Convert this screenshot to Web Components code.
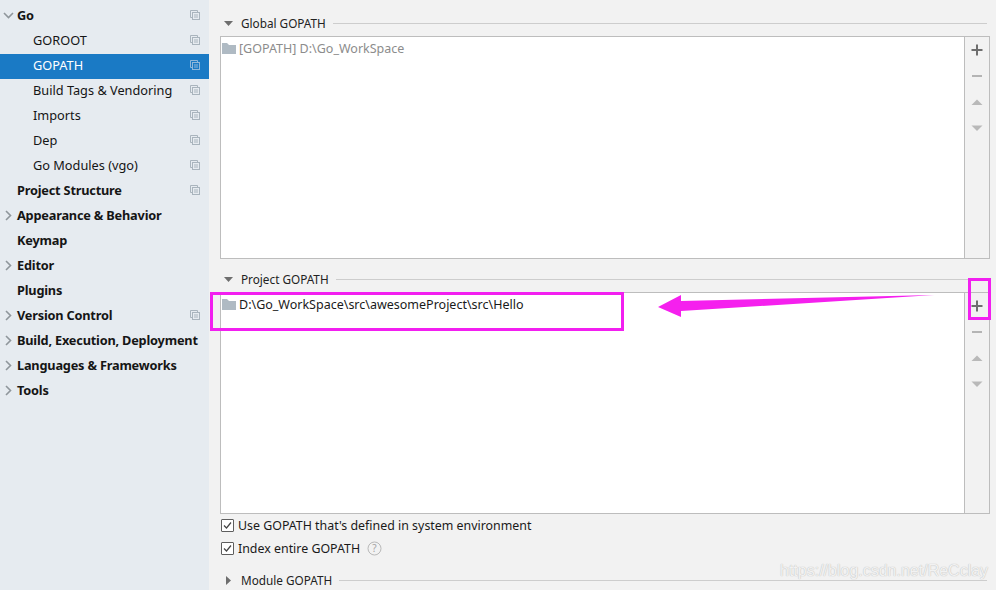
<!DOCTYPE html>
<html><head><meta charset="utf-8">
<style>
html,body{margin:0;padding:0;height:590px;overflow:hidden;background:#f2f2f2}
body{font:12.75px "Noto Sans",sans-serif;color:#1a1a1a}
</style></head>
<body>
<settings-app>
  <settings-nav slot="nav">
    <nav-row level="0" arrow="down" copy>Go</nav-row>
    <nav-row level="1" copy>GOROOT</nav-row>
    <nav-row level="1" copy selected>GOPATH</nav-row>
    <nav-row level="1" copy>Build Tags &amp; Vendoring</nav-row>
    <nav-row level="1" copy>Imports</nav-row>
    <nav-row level="1" copy>Dep</nav-row>
    <nav-row level="1" copy>Go Modules (vgo)</nav-row>
    <nav-row level="0" copy>Project Structure</nav-row>
    <nav-row level="0" arrow="right">Appearance &amp; Behavior</nav-row>
    <nav-row level="0">Keymap</nav-row>
    <nav-row level="0" arrow="right">Editor</nav-row>
    <nav-row level="0">Plugins</nav-row>
    <nav-row level="0" arrow="right" copy>Version Control</nav-row>
    <nav-row level="0" arrow="right">Build, Execution, Deployment</nav-row>
    <nav-row level="0" arrow="right">Languages &amp; Frameworks</nav-row>
    <nav-row level="0" arrow="right">Tools</nav-row>
  </settings-nav>
  <section-head open style="margin-top:12px">Global GOPATH</section-head>
  <path-table style="height:223px;margin-top:4px" muted path="[GOPATH] D:\Go_WorkSpace"></path-table>
  <section-head open style="margin-top:11px">Project GOPATH</section-head>
  <path-table style="height:222px;margin-top:4px" path="D:\Go_WorkSpace\src\awesomeProject\src\Hello"></path-table>
  <check-row>Use GOPATH that's defined in system environment</check-row>
  <check-row help>Index entire GOPATH</check-row>
  <section-head style="margin-top:11px">Module GOPATH</section-head>
  <red-marks slot="overlay"></red-marks>
</settings-app>
<script>
function def(name, css, html){
  customElements.define(name, class extends HTMLElement{
    connectedCallback(){
      if(this.shadowRoot) return;
      const r=this.attachShadow({mode:'open'});
      r.innerHTML='<style>'+css+'</style>'+(typeof html==='function'?html(this):html);
    }
  });
}
def('settings-app',
 ':host{display:grid;grid-template-columns:209px 1fr;height:590px;position:relative;overflow:hidden}'+
 '.main{display:flex;flex-direction:column;padding:2px 6px 0 11px;min-width:0}',
 '<slot name="nav"></slot><div class="main"><slot></slot></div><slot name="overlay"></slot>');
def('settings-nav',
 ':host{display:block;background:#e6ebf0;padding-top:4px;height:586px}',
 '<slot></slot>');
const COPY='<svg class="c" width="10" height="10" viewBox="0 0 10 10" fill="none" stroke="currentColor"><path d="M2.500 7.500H.5V.5H7.500V2.500"/><rect x="2.500" y="2.500" width="7" height="7"/><path d="M4 5h4M4 7h4"/></svg>';
def('nav-row',
 ':host{display:flex;align-items:center;height:25px;box-sizing:border-box;padding-bottom:3px;position:relative;white-space:nowrap;color:#151515}'+
 ':host([level="0"]){padding-left:17px;font-weight:700;letter-spacing:-.2px}'+
 ':host([level="1"]){padding-left:33px}'+
 ':host([selected]){background:#1a7ac5;color:#fff}'+
 '.a{position:absolute;left:3px;top:6px;color:#8f969b}'+
 '.c{position:absolute;left:190px;top:6px;color:#a9b4bd}'+
 ':host([selected]) .c{color:#8fb8da}',
 h=>{
  const a=h.getAttribute('arrow');
  let s='';
  if(a==='down') s='<svg class="a" width="11" height="11" viewBox="0 0 11 11" fill="none" stroke="currentColor" stroke-width="1.6"><path d="M1 3l4.500 4.500L10 3"/></svg>';
  if(a==='right') s='<svg class="a" width="11" height="11" viewBox="0 0 11 11" fill="none" stroke="currentColor" stroke-width="1.6"><path d="M3 1l4.500 4.500L3 10"/></svg>';
  return s+'<slot></slot>'+(h.hasAttribute('copy')?COPY:'');
 });
def('section-head',
 ':host{display:flex;align-items:center;height:18px;font-size:11.75px;color:#222;padding-left:4px;flex:none}'+
 'svg{flex:none;margin-right:8px;color:#6e6e6e}'+
 'span{white-space:nowrap}i{flex:1;height:1px;background:#cdcdcd;margin:0 3px 0 7px}',
 h=>(h.hasAttribute('open')
   ?'<svg width="9" height="9" viewBox="0 0 9 9" fill="currentColor"><path d="M0 2h9L4.500 7z"/></svg>'
   :'<svg width="9" height="9" viewBox="0 0 9 9" fill="currentColor"><path d="M2 0v9l5-4.500z"/></svg>')+'<span><slot></slot></span><i></i>');
def('path-table',
 ':host{display:flex;flex:none;border:1px solid #bdbdbd;box-sizing:border-box;background:#fff}'+
 '.list{flex:1;padding:2px 0;min-width:0}'+
 '.item{display:flex;align-items:center;gap:3px;height:18px;font-size:12.5px;color:#1a1a1a;white-space:nowrap}'+
 ':host([muted]) .item{color:#8c8c8c}'+
 '.tb{width:24px;flex:none;border-left:1px solid #bdbdbd;background:#f2f2f2;display:flex;flex-direction:column;align-items:center;padding-top:1px}',
 h=>'<div class="list"><div class="item"><svg width="15" height="13" viewBox="0 0 15 13" fill="#afbac3" style="flex:none"><path d="M1 1h5l2 2h7v9H1z"/></svg><span>'+h.getAttribute('path')+'</span></div></div>'+
 '<div class="tb"><tool-icons></tool-icons></div>');
def('tool-icons',
 ':host{display:flex;flex-direction:column;align-items:center;padding-top:5px}svg{display:block;margin-bottom:12px}',
 '<svg width="14" height="14" viewBox="0 0 14 14" fill="#6e6e6e"><path d="M6 1.500h2V6h4.500v2H8v4.500H6V8H1.500V6H6z"/></svg>'+
 '<svg width="14" height="14" viewBox="0 0 14 14" fill="#b4b4b4"><path d="M2 6h10v2H2z"/></svg>'+
 '<svg width="14" height="14" viewBox="0 0 14 14" fill="#b9b9b9"><path d="M1.500 10L7 4.500 12.500 10z"/></svg>'+
 '<svg width="14" height="14" viewBox="0 0 14 14" fill="#b9b9b9"><path d="M1.500 4.500h11L7 10z"/></svg>');
def('check-row',
 ':host{display:flex;align-items:center;height:23px;box-sizing:border-box;padding:0 0 1px 1px;flex:none;font-size:12.4px;color:#1a1a1a;white-space:nowrap}'+
 '.b{flex:none;box-sizing:border-box;width:13px;height:13px;border:1px solid #5e5e5e;border-radius:1px;background:#fff;margin-right:4px;display:block}'+
 '.h{margin-left:7px}',
 h=>'<svg class="b" viewBox="0 0 11 11" fill="none" stroke="#444" stroke-width="1.200"><path d="M2 5.500l2.500 2.500 4.500-5.500"/></svg><slot></slot>'+
 (h.hasAttribute('help')?'<svg class="h" width="15" height="15" viewBox="0 0 15 15" fill="none"><circle cx="7.500" cy="7.500" r="6.500" stroke="#b9b9b9"/><text x="7.500" y="11" text-anchor="middle" font-size="10" font-family="Noto Sans" fill="#a5a5a5">?</text></svg>':''));
def('red-marks',
 ':host{position:absolute;inset:0;pointer-events:none;display:block}'+
 '.r{position:absolute;border:3px solid #f21ff0;box-sizing:border-box}'+
 '.w{position:absolute;left:780px;top:562px;font:16px "Liberation Sans",sans-serif;color:#f2f2f2;text-shadow:0 0 1px #bdbdbd,0 0 1px #d0d0d0;white-space:nowrap}'+
 'svg{position:absolute;left:0;top:0}',
 '<div class="r" style="left:210px;top:292px;width:414px;height:39px"></div>'+
 '<div class="r" style="left:968px;top:278px;width:23px;height:42px"></div>'+
 '<svg width="996" height="590"><polygon fill="#f520ee" points="658,307 681,295 681,301 934,295 681,311 681,317"/></svg>'+
 '<div class="w">https://blog.csdn.net/ReCclay</div>');
</script>
</body></html>
